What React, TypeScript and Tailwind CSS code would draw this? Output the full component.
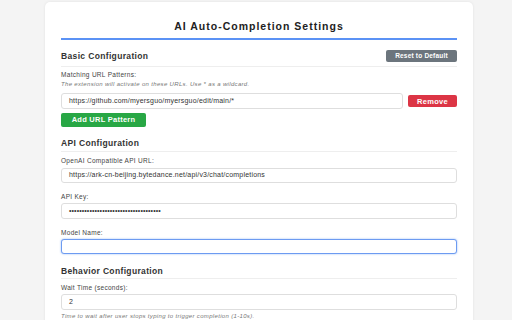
import React from "react";

function Label({ children, className = "" }: { children: React.ReactNode; className?: string }) {
  return (
    <div className={`text-[6.5px] leading-[8px] tracking-[0.3px] text-[#444] ${className}`}>{children}</div>
  );
}

function Field({ children, focused = false, className = "" }: { children?: React.ReactNode; focused?: boolean; className?: string }) {
  return (
    <div
      className={`h-[15.6px] rounded-[3px] border px-[7px] flex items-center text-[7px] tracking-[0.2px] text-[#333] bg-white ${
        focused ? "border-[#6d9bf1] shadow-[0_0_2px_rgba(66,133,244,0.6)]" : "border-[#dedede]"
      } ${className}`}
    >
      {children}
    </div>
  );
}

function Heading({ children }: { children: React.ReactNode }) {
  return <div className="text-[8.5px] leading-[10px] font-bold tracking-[0.35px] text-[#333]">{children}</div>;
}

export default function App() {
  return (
    <div className="w-[512px] h-[320px] overflow-hidden bg-[#f4f4f4] pt-[2px] pl-[45px] font-['Liberation_Sans',Arial,sans-serif]">
      <div className="w-[428px] h-[400px] rounded-[5px] bg-white shadow-[0_0_3px_rgba(0,0,0,0.08)] px-[16px] pt-[18px]">
        <div className="text-center text-[10.5px] leading-[12px] font-bold tracking-[1px] text-[#222] pb-[6px] border-b-2 border-[#5b92f5]">
          AI Auto-Completion Settings
        </div>

        {/* Basic Configuration */}
        <div className="mt-[10px] flex items-center justify-between pb-[4px] border-b border-[#eeeeee]">
          <Heading>Basic Configuration</Heading>
          <div className="h-[12px] w-[71px] rounded-[2px] bg-[#6c757d] text-white text-[6.5px] font-bold tracking-[0.2px] flex items-center justify-center">
            Reset to Default
          </div>
        </div>
        <Label className="mt-[3.5px]">Matching URL Patterns:</Label>
        <div className="mt-[1.75px] text-[6px] leading-[8px] italic tracking-[0.33px] text-[#777]">
          The extension will activate on these URLs. Use * as a wildcard.
        </div>
        <div className="mt-[5px] flex items-center gap-[5px]">
          <Field className="flex-1 h-[16px]">https://github.com/myersguo/myersguo/edit/main/*</Field>
          <div className="h-[12px] w-[49px] rounded-[2px] bg-[#dc3545] text-white text-[7.5px] font-bold tracking-[0.3px] flex items-center justify-center">
            Remove
          </div>
        </div>
        <div className="mt-[4px] h-[13.5px] w-[85px] rounded-[2px] bg-[#28a745] text-white text-[7.5px] font-bold tracking-[0.25px] flex items-center justify-center">
          Add URL Pattern
        </div>

        {/* API Configuration */}
        <div className="mt-[11px] pb-[3px] border-b border-[#eeeeee]">
          <Heading>API Configuration</Heading>
        </div>
        <Label className="mt-[5.25px] mb-[2.5px]">OpenAI Compatible API URL:</Label>
        <Field>https://ark-cn-beijing.bytedance.net/api/v3/chat/completions</Field>
        <Label className="mt-[9.5px] mb-[2.5px]">API Key:</Label>
        <Field>
          <span className="tracking-[0.1px]">{"•".repeat(36)}</span>
        </Field>
        <Label className="mt-[10px] mb-[2px]">Model Name:</Label>
        <Field focused className="h-[15px]" />

        {/* Behavior Configuration */}
        <div className="mt-[12px] pb-[2.5px] border-b border-[#eeeeee]">
          <Heading>Behavior Configuration</Heading>
        </div>
        <Label className="mt-[5px] mb-[2px]">Wait Time (seconds):</Label>
        <Field>2</Field>
        <div className="mt-[2.2px] text-[6px] leading-[8px] italic tracking-[0.33px] text-[#777]">
          Time to wait after user stops typing to trigger completion (1-10s).
        </div>
      </div>
    </div>
  );
}
